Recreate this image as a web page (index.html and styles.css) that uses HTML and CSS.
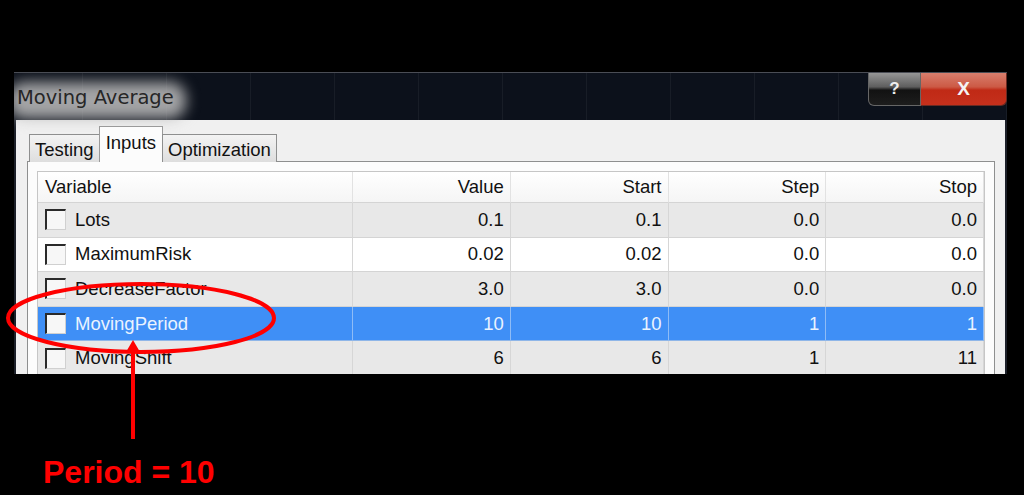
FILE: index.html
```html
<!DOCTYPE html>
<html lang="en">
<head>
    <meta charset="UTF-8">
    <meta name="viewport" content="width=device-width, initial-scale=1.0">
    <title>Moving Average</title>
    <link rel="stylesheet" href="styles.css">
</head>
<body>
    <div class="desktop">
        <div class="window">
            <div class="titlebar">
                <div class="title">Moving Average</div>
                <div class="controls">
                    <div class="btn-help">?</div>
                    <div class="btn-close">X</div>
                </div>
            </div>
            <div class="client">
                <div class="tabs">
                    <div class="tab">Testing</div>
                    <div class="tab active">Inputs</div>
                    <div class="tab">Optimization</div>
                </div>
                <div class="panel">
                    <div class="grid">
                        <div class="cell head left">Variable</div>
                        <div class="cell head">Value</div>
                        <div class="cell head">Start</div>
                        <div class="cell head">Step</div>
                        <div class="cell head">Stop</div>

                        <div class="row gray">
                            <div class="cell left"><span class="check"></span>Lots</div>
                            <div class="cell">0.1</div><div class="cell">0.1</div><div class="cell">0.0</div><div class="cell">0.0</div>
                        </div>
                        <div class="row white">
                            <div class="cell left"><span class="check"></span>MaximumRisk</div>
                            <div class="cell">0.02</div><div class="cell">0.02</div><div class="cell">0.0</div><div class="cell">0.0</div>
                        </div>
                        <div class="row gray">
                            <div class="cell left"><span class="check"></span>DecreaseFactor</div>
                            <div class="cell">3.0</div><div class="cell">3.0</div><div class="cell">0.0</div><div class="cell">0.0</div>
                        </div>
                        <div class="row selected">
                            <div class="cell left"><span class="check"></span>MovingPeriod</div>
                            <div class="cell">10</div><div class="cell">10</div><div class="cell">1</div><div class="cell">1</div>
                        </div>
                        <div class="row gray">
                            <div class="cell left"><span class="check"></span>MovingShift</div>
                            <div class="cell">6</div><div class="cell">6</div><div class="cell">1</div><div class="cell">11</div>
                        </div>
                    </div>
                </div>
            </div>
        </div>
    </div>

    <!-- annotation drawn over the screenshot -->
    <svg class="markup" width="1024" height="495" viewBox="0 0 1024 495">
        <ellipse cx="141" cy="318" rx="133" ry="34" fill="none" stroke="#ff0000" stroke-width="4"/>
        <line x1="133" y1="349" x2="133" y2="439" stroke="#ff0000" stroke-width="4"/>
        <polygon points="133,340 126,352 140,352" fill="#ff0000"/>
    </svg>
    <div class="callout">Period = 10</div>
</body>
</html>
```

FILE: styles.css
```css
body {
    margin: 0;
    background: #000;
    font-family: "Liberation Sans", Arial, sans-serif;
    height: 495px;
    overflow: hidden;
    position: relative;
}

.desktop {
    padding: 72px 17px 0 14px;
}

/* Janela */
.window {
    height: 302px;
    overflow: hidden;
    background: #0c111b;
    border-top: 1px solid #4a4d55;
    box-sizing: border-box;
}

.titlebar {
    height: 47px;
    display: flex;
    justify-content: space-between;
    align-items: flex-start;
    background:
        repeating-linear-gradient(to right, transparent 0, transparent 68px, rgba(255, 255, 255, 0.05) 68px, rgba(255, 255, 255, 0.05) 69px, transparent 69px, transparent 84px),
        #0c111b;
}

.title {
    position: relative;
    z-index: 0;
    margin-top: 9px;
    padding: 4px 10px 6px 3px;
    font-family: "DejaVu Sans", "Liberation Sans", sans-serif;
    font-size: 19.5px;
    color: #262626;
}

.title::before {
    content: "";
    position: absolute;
    left: -6px;
    right: -2px;
    top: 0;
    bottom: -4px;
    background: rgba(190, 190, 190, 0.85);
    border-radius: 16px;
    filter: blur(7px);
    z-index: -1;
}

.controls {
    display: flex;
    height: 34px;
    margin-top: -1px;
}

.btn-help {
    width: 51px;
    background: linear-gradient(to bottom, #9a9a9a 0%, #5e5e5e 45%, #121212 55%, #1d1d1d 100%);
    border: 1px solid #666;
    border-top: none;
    border-radius: 0 0 0 6px;
    color: #eee;
    font-weight: bold;
    font-size: 17px;
    display: flex;
    align-items: center;
    justify-content: center;
}

.btn-close {
    width: 85px;
    background: linear-gradient(to bottom, #d98170 0%, #cc5a45 45%, #c02a16 55%, #c5301c 100%);
    border: 1px solid #6a2a22;
    border-top: none;
    border-left: none;
    border-radius: 0 0 6px 0;
    color: #f4f4f4;
    font-weight: bold;
    font-size: 19px;
    display: flex;
    align-items: center;
    justify-content: center;
}

.client {
    background: #f0f0f0;
    border-left: 2px solid #1c2029;
    border-right: 2px solid #1c2029;
    height: 260px;
    padding: 10px 10px 0 11px;
    box-sizing: border-box;
}

/* Abas */
.tabs {
    display: flex;
    align-items: flex-end;
    height: 31px;
    padding-left: 2px;
    position: relative;
    z-index: 1;
}

.tab {
    height: 25px;
    padding: 2px 5px 0;
    background: linear-gradient(to bottom, #f3f3f3, #dedede);
    border: 1px solid #8e8f8f;
    border-bottom: none;
    font-size: 18.5px;
    color: #111;
    display: flex;
    align-items: center;
    margin-bottom: -1px;
    margin-right: -1px;
}

.tab.active {
    height: 31px;
    background: #fcfcfc;
    padding: 0 6px 4px;
    border-color: #9a9a9a;
}

.panel {
    background: #fcfcfc;
    border: 1px solid #8e8f8f;
    padding: 9px 9px 0 9px;
    height: 240px;
    box-sizing: border-box;
}

/* Tabela */
.grid {
    display: grid;
    grid-template-columns: 315px repeat(4, 1fr);
    grid-template-rows: 31px repeat(5, 34.6px);
    border: 1px solid #c6c6c6;
    font-size: 18.5px;
    color: #111;
}

.row {
    display: contents;
}

.cell {
    display: flex;
    align-items: center;
    justify-content: flex-end;
    padding: 0 6px;
    border-right: 1px solid #d6d6d6;
    border-bottom: 1px solid #d4d4d4;
}

.cell.left {
    justify-content: flex-start;
    padding-left: 7px;
}

.cell.head {
    background: linear-gradient(to bottom, #ffffff, #f5f5f5);
    border-right-color: #e2e2e2;
}

.row.gray .cell {
    background: #e8e8e8;
}

.row.white .cell {
    background: #fff;
}

.row.selected .cell {
    background: #3f8ff6;
    color: #eaf3ff;
    border-right-color: #8fbcf6;
    border-bottom-color: #8fb6e8;
}

.check {
    width: 18px;
    height: 18px;
    margin-right: 9px;
    background: #f7f7f7;
    border-top: 2px solid #2a2a2a;
    border-left: 2px solid #2a2a2a;
    border-right: 1px solid #d0d0d0;
    border-bottom: 1px solid #d0d0d0;
    flex: none;
}

/* Anotação */
.markup {
    position: absolute;
    left: 0;
    top: 0;
    pointer-events: none;
}

.callout {
    position: absolute;
    left: 43px;
    top: 456px;
    font-size: 32px;
    line-height: 32px;
    font-weight: bold;
    color: #ff0000;
}
```
